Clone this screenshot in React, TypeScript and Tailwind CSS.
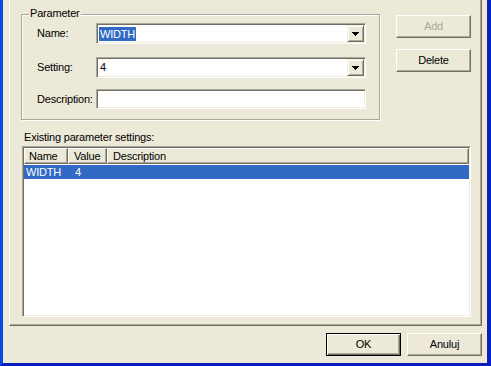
import React from "react";

const Arrow = () => (
  <svg width="7" height="4" viewBox="0 0 7 4" shapeRendering="crispEdges">
    <rect x="0" y="0" width="7" height="1" fill="#000" />
    <rect x="1" y="1" width="5" height="1" fill="#000" />
    <rect x="2" y="2" width="3" height="1" fill="#000" />
    <rect x="3" y="3" width="1" height="1" fill="#000" />
  </svg>
);

const Combo = ({ children }: { children: React.ReactNode }) => (
  <div className="w-[270px] h-[21px] flex border border-t-[#aca899] border-l-[#aca899] border-r-white border-b-white bg-white shadow-[inset_1px_1px_0_#716f64,inset_-1px_-1px_0_#f1efe2] p-[1px]">
    <div className="flex-1 flex items-center pl-[1px]">{children}</div>
    <div className="w-[17px] h-full bg-[#ece9d8] border border-t-[#f1efe2] border-l-[#f1efe2] border-r-[#716f64] border-b-[#716f64] shadow-[inset_1px_1px_0_#fff,inset_-1px_-1px_0_#aca899] flex items-center justify-center">
      <Arrow />
    </div>
  </div>
);

const Btn = ({
  children,
  disabled,
  def,
}: {
  children: React.ReactNode;
  disabled?: boolean;
  def?: boolean;
}) =>
  def ? (
    <div className="w-[75px] h-[23px] bg-[#ece9d8] border border-black shadow-[inset_1px_1px_0_#fff,inset_-1px_-1px_0_#716f64,inset_-2px_-2px_0_#aca899] flex items-center justify-center">
      {children}
    </div>
  ) : (
    <div
      className={
        "w-[75px] h-[23px] bg-[#ece9d8] border border-t-white border-l-white border-r-[#716f64] border-b-[#716f64] shadow-[inset_-1px_-1px_0_#aca899] flex items-center justify-center " +
        (disabled ? "text-[#aca899]" : "text-black")
      }
    >
      {children}
    </div>
  );

export default function App() {
  return (
    <div className="w-[491px] h-[366px] bg-[#ece9d8] flex flex-col border-l-[3px] border-l-[#0b47e5] border-r-[4px] border-r-[#0521c8] border-b-[3px] border-b-[#0a1fb9] font-['Liberation_Sans',Arial,sans-serif] text-[11px] leading-[13px] tracking-[-0.2px] text-black select-none">
      {/* property page panel */}
      <div className="ml-[6px] mr-[5px] h-[326px] shrink-0 border-l border-l-white border-r border-b border-r-[#716f64] border-b-[#716f64] shadow-[inset_-1px_-1px_0_#aca899] flex flex-col">
        <div className="flex pt-[14px]">
          {/* group box */}
          <div className="relative ml-[11px] w-[359px] h-[106px] border border-[#aca899] shadow-[inset_1px_1px_0_#fff,1px_1px_0_#fff] pl-[15px] pt-[8px] flex flex-col">
            <span className="absolute left-[7px] top-[-8px] px-[1px] bg-[#ece9d8]">
              Parameter
            </span>
            <div className="flex items-center">
              <span className="w-[59px]">Name:</span>
              <Combo>
                <span className="bg-[#316ac5] text-white px-[1px] leading-[14px]">
                  WIDTH
                </span>
              </Combo>
            </div>
            <div className="flex items-center mt-[13px]">
              <span className="w-[59px]">Setting:</span>
              <Combo>
                <span className="px-[1px]">4</span>
              </Combo>
            </div>
            <div className="flex items-center mt-[11px]">
              <span className="w-[59px]">Description:</span>
              <div className="w-[270px] h-[20px] border border-t-[#aca899] border-l-[#aca899] border-r-white border-b-white bg-white shadow-[inset_1px_1px_0_#716f64,inset_-1px_-1px_0_#f1efe2]" />
            </div>
          </div>
          {/* side buttons */}
          <div className="ml-[16px] mt-[1px] flex flex-col gap-[11px]">
            <Btn disabled>Add</Btn>
            <Btn>Delete</Btn>
          </div>
        </div>

        <div className="ml-[14px] mt-[11px]">Existing parameter settings:</div>

        {/* list view */}
        <div className="ml-[12px] mt-[2px] w-[449px] h-[171px] border border-t-[#aca899] border-l-[#aca899] border-r-white border-b-white bg-white shadow-[inset_1px_1px_0_#716f64,inset_-1px_-1px_0_#f1efe2] p-[1px] flex flex-col">
          <div className="flex h-[16px] shrink-0 bg-[#ece9d8]">
            <div className="w-[44px] h-full border-t border-l border-t-white border-l-white border-r border-b border-r-[#716f64] border-b-[#716f64] shadow-[inset_-1px_-1px_0_#aca899] pl-[4px] flex items-center">
              Name
            </div>
            <div className="w-[39px] h-full border-t border-l border-t-white border-l-white border-r border-b border-r-[#716f64] border-b-[#716f64] shadow-[inset_-1px_-1px_0_#aca899] pl-[5px] flex items-center">
              Value
            </div>
            <div className="flex-1 h-full border-t border-l border-t-white border-l-white border-r border-b border-r-[#716f64] border-b-[#716f64] shadow-[inset_-1px_-1px_0_#aca899] pl-[5px] flex items-center">
              Description
            </div>
          </div>
          <div className="mt-[1px] flex h-[14px] bg-[#316ac5] text-white items-center">
            <span className="w-[44px] pl-[2px]">WIDTH</span>
            <span className="w-[39px] pl-[7px]">4</span>
            <span className="flex-1" />
          </div>
        </div>
      </div>

      {/* bottom buttons */}
      <div className="flex justify-end gap-[6px] mt-[7px] pr-[5px]">
        <Btn def>OK</Btn>
        <Btn>Anuluj</Btn>
      </div>
    </div>
  );
}
